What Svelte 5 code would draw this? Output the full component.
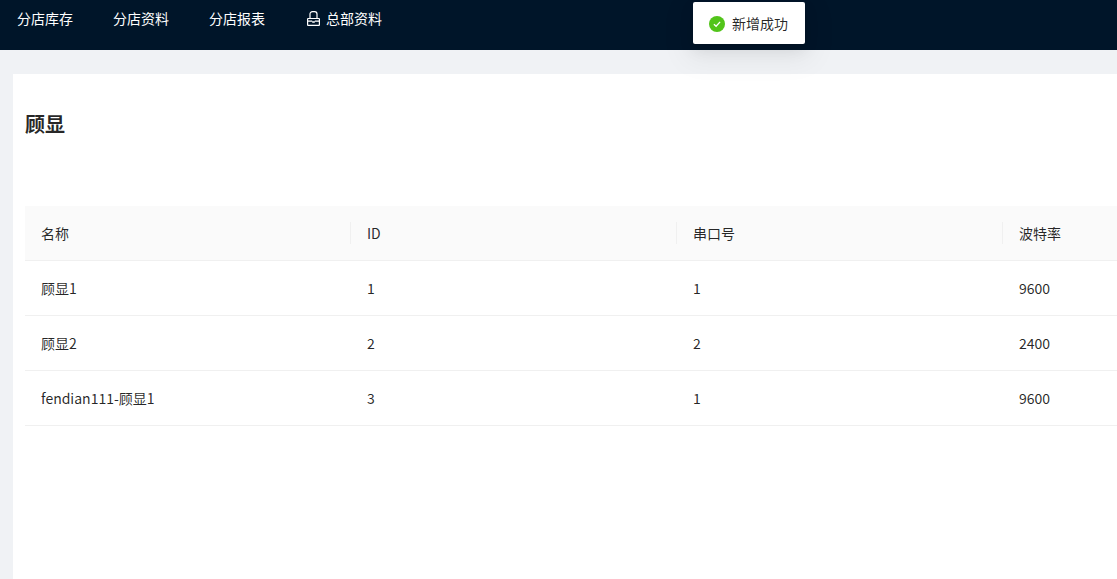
<script>
  const nav = ['分店库存', '分店资料', '分店报表'];
  const columns = ['名称', 'ID', '串口号', '波特率'];
  const rows = [
    ['顾显1', '1', '1', '9600'],
    ['顾显2', '2', '2', '2400'],
    ['fendian111-顾显1', '3', '1', '9600']
  ];
</script>

<div class="layout">
  <header class="header">
    <nav class="nav">
      {#each nav as item}
        <span class="nav_item">{item}</span>
      {/each}
      <span class="nav_item locked">
        <svg class="lock" width="13" height="15" viewBox="0 0 13 15" fill="none" stroke="currentColor" stroke-width="1.2">
          <rect x="0.6" y="7.5" width="11.8" height="6.9" rx="0.5" />
          <path d="M3 7.5V3a2.4 2.4 0 0 1 2.4-2.4h2.2A2.4 2.4 0 0 1 10 3v4.5" />
          <path d="M0.6 10.2h4.6M7.8 10.2h4.6M5.2 11h2.6" stroke-width="1.3" />
        </svg>
        总部资料
      </span>
    </nav>
  </header>

  <main class="main">
    <section class="card">
      <h1 class="title">顾显</h1>
      <table class="table">
        <colgroup>
          {#each columns as _}
            <col class="col" />
          {/each}
        </colgroup>
        <thead>
          <tr>
            {#each columns as col}
              <th>{col}</th>
            {/each}
          </tr>
        </thead>
        <tbody>
          {#each rows as row}
            <tr>
              {#each row as cell}
                <td>{cell}</td>
              {/each}
            </tr>
          {/each}
        </tbody>
      </table>
    </section>
  </main>

  <div class="toast">
    <svg width="16" height="16" viewBox="0 0 16 16">
      <circle cx="8" cy="8" r="8" fill="#52c41a" />
      <path d="M4.9 8.2l2.2 2.1 4-4.4" fill="none" stroke="#fff" stroke-width="1.3" />
    </svg>
    <span class="toast_text">新增成功</span>
  </div>
</div>

<style>
  :global(body) {
    background: #f0f2f5;
    overflow: hidden;
  }

  .layout {
    height: 579px;
    overflow: hidden;
    display: flex;
    flex-direction: column;
    font-family: "Noto Sans CJK SC", sans-serif;
    font-size: 14px;
    color: rgba(0, 0, 0, 0.85);
  }

  .header {
    height: 50px;
    flex: none;
    background: #001529;
  }

  .nav {
    display: flex;
    padding-left: 17px;
    gap: 40px;
    height: 36px;
    align-items: center;
    color: #fff;
  }

  .nav_item {
    display: flex;
    align-items: center;
    white-space: nowrap;
  }

  .locked {
    gap: 6px;
    margin-left: 2px;
  }

  .main {
    flex: 1;
    padding: 24px 0 0 13px;
    min-height: 0;
  }

  .card {
    height: 100%;
    background: #fff;
    padding: 0 12px;
    overflow: hidden;
  }

  .title {
    margin: 0;
    padding-top: 36px;
    height: 96px;
    box-sizing: border-box;
    font-size: 20px;
    line-height: 28px;
    font-weight: 700;
    color: rgba(0, 0, 0, 0.85);
  }

  .table {
    margin-top: 36px;
    table-layout: fixed;
    border-collapse: separate;
    border-spacing: 0;
    width: 1304px;
  }

  .col {
    width: 326px;
  }

  th, td {
    height: 55px;
    box-sizing: border-box;
    padding: 0 16px;
    text-align: left;
    font-weight: 400;
    border-bottom: 1px solid #f0f0f0;
    position: relative;
  }

  th {
    background: #fafafa;
  }

  th + th::before {
    content: "";
    position: absolute;
    left: -1px;
    top: 16px;
    width: 1px;
    height: 22px;
    background: #f0f0f0;
  }

  .toast {
    position: absolute;
    left: 693px;
    top: 2px;
    width: 112px;
    height: 42px;
    box-sizing: border-box;
    padding-left: 16px;
    display: flex;
    align-items: center;
    gap: 7px;
    background: #fff;
    border-radius: 2px;
    box-shadow: 0 3px 6px -4px rgba(0, 0, 0, 0.12), 0 6px 16px 0 rgba(0, 0, 0, 0.08), 0 9px 28px 8px rgba(0, 0, 0, 0.05);
  }

  .toast svg {
    margin-top: 2px;
  }
</style>
